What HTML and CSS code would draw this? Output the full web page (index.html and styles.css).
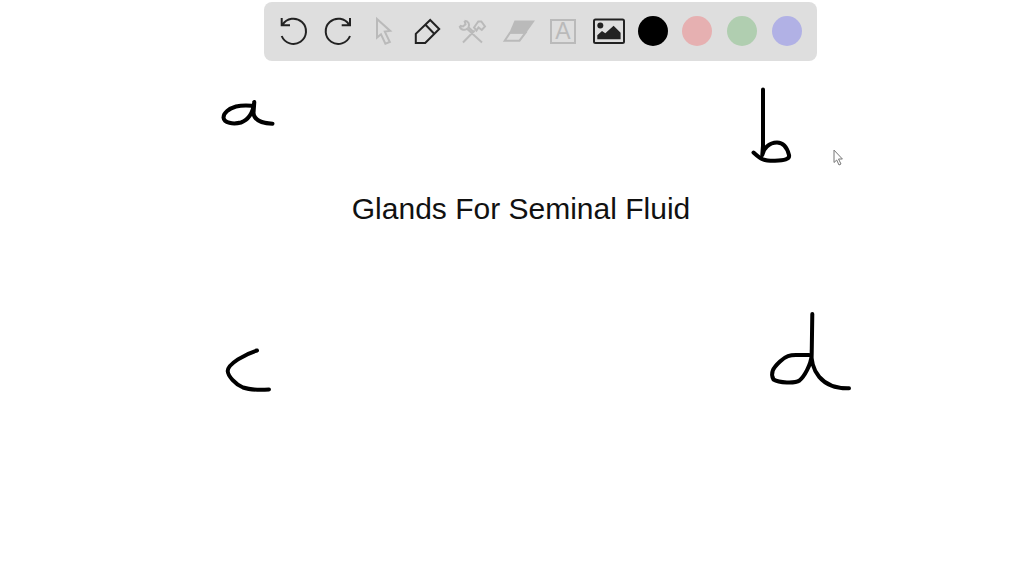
FILE: index.html
```html
<!DOCTYPE html>
<html lang="en">
<head>
<meta charset="utf-8">
<meta name="viewport" content="width=device-width, initial-scale=1">
<title>Glands For Seminal Fluid</title>
<link rel="stylesheet" href="styles.css">
</head>
<body>
<main class="board">
  <header class="board-header">
    <div class="toolbar" role="toolbar" aria-label="Drawing tools">
      <button class="tool" type="button" aria-label="Undo">
        <svg class="icon" viewBox="0 0 30 30"><path d="M2.700 20A12.600 12.600 0 1 0 3.500 9M2.700 2V9.300H11"/></svg>
      </button>
      <button class="tool" type="button" aria-label="Redo">
        <svg class="icon" viewBox="0 0 30 30"><path d="M26 20A12.600 12.600 0 1 1 25.200 9M26 2V9.300H17.700"/></svg>
      </button>
      <button class="tool tool-muted" type="button" aria-label="Select">
        <svg class="icon" viewBox="0 0 30 30"><path d="M8 3L21.200 14.900L15.800 15.600L20.800 26L16.400 27.700L12 18.300L8 21.600Z"/></svg>
      </button>
      <button class="tool" type="button" aria-label="Pen">
        <svg class="icon" viewBox="0 0 30 30"><path d="M17.200 4L26.200 13L12.200 27H2.800V17.900ZM12.500 8.800L21.200 17.800"/></svg>
      </button>
      <button class="tool tool-muted" type="button" aria-label="Tools">
        <svg class="icon" viewBox="0 0 30 30"><path d="M1.700 9.800C2 13.500 6 15 9 12.800L24 26.500M6.500 4.800C10.500 5 12 8.500 10.500 11.300L15 15.500M1.700 9.800L5 10.500L7.500 8.300L6.500 4.800M16.700 14.500L5 26.500M16 11.500L20.300 5.500H23.300L27 10.500L23.800 14L20.500 11.500L18.500 14.500Z"/></svg>
      </button>
      <button class="tool tool-muted" type="button" aria-label="Eraser">
        <svg class="icon" viewBox="0 0 30 30"><path d="M7 16.700L1.700 24.700H16.500L22.500 16.700Z"/><path class="solid" d="M11.500 4.500H32L22.700 17.500H6Z"/></svg>
      </button>
      <button class="tool tool-muted" type="button" aria-label="Text">
        <svg class="icon" viewBox="0 0 30 30"><rect x="3" y="4" width="24" height="23"/><text class="icon-letter" x="15" y="23" text-anchor="middle">A</text></svg>
      </button>
      <button class="tool" type="button" aria-label="Image">
        <svg class="icon" viewBox="0 0 30 30"><rect x="1" y="3.500" width="30" height="23.500" rx="1.500"/><circle class="solid" cx="7.300" cy="9.500" r="3"/><path class="solid" d="M4.300 23.300V19.300L9 15L12.300 17.300L20.600 9.700L27.600 16.700V23.300Z"/></svg>
      </button>
      <button class="tool swatch swatch-black" type="button" aria-label="Black"></button>
      <button class="tool swatch swatch-red" type="button" aria-label="Red"></button>
      <button class="tool swatch swatch-green" type="button" aria-label="Green"></button>
      <button class="tool swatch swatch-blue" type="button" aria-label="Blue"></button>
    </div>
  </header>
  <h1 class="title">Glands For Seminal Fluid</h1>
  <svg class="drawing" viewBox="0 0 1024 576" role="img" aria-label="Handwritten letters a, b, c and d">
    <path d="M251.500 105.700C246 105.300 241 105.300 236 106.500C229 108.500 223.500 113 223.500 117.500C224 123 233 124.500 241 122.500C248 120 253 113 254.300 102L253.500 113C254 119 259 123 272.500 123.700"/>
    <path d="M763 89.500V146L762.300 155C763 149 769 142.500 777 142.500C785 142.500 787.500 149 789 155C790 159.500 784 160.500 775 160.800C764 161 761 159.500 753.500 152.500"/>
    <path d="M257 350.500C245 354 228 364 227.700 371C228 376 235 384 243 387.500C250 390 260 390 269 389.500"/>
    <path d="M812.300 314L811.700 355C811 365 804 377 799.500 380.500C795 383.500 779 383 773.500 379.500C770 373 773 368 780 361.500C786 356 790 355 796 355H809M811.700 350C810 370 821 389 849 388.300"/>
    <path class="cursor" d="M834 150.500V162.500L836.700 160L839 165L841 164L838.500 159H842Z"/>
  </svg>
</main>
</body>
</html>
```

FILE: styles.css
```css
* {
  box-sizing: border-box;
}

body {
  margin: 0;
  background: #fff;
  color: #111;
  font-family: "Liberation Sans", Arial, sans-serif;
}

.board {
  position: relative;
  min-height: 100vh;
  overflow: hidden;
}

.board-header {
  display: flex;
  justify-content: center;
  padding: 2px 0 0 57px;
}

.toolbar {
  display: flex;
  align-items: center;
  justify-content: space-between;
  flex: 0 1 553px;
  padding: 14px 15px 15px;
  border-radius: 8px;
  background: #dedede;
}

.tool {
  display: block;
  width: 30px;
  height: 30px;
  padding: 0;
  border: 0;
  background: none;
  color: #222;
  cursor: pointer;
}

.tool-muted {
  color: #bababa;
}

.icon {
  display: block;
  width: 30px;
  height: 30px;
  overflow: visible;
  fill: none;
  stroke: currentColor;
  stroke-width: 2;
}

.icon .solid,
.icon-letter {
  fill: currentColor;
  stroke: none;
}

.icon-letter {
  font-family: "Liberation Sans", Arial, sans-serif;
  font-size: 23px;
}

.swatch {
  border-radius: 50%;
}

.swatch-black {
  background: #000;
}

.swatch-red {
  background: #e6b0b1;
}

.swatch-green {
  background: #b0ceb0;
}

.swatch-blue {
  background: #b1b1e5;
}

.title {
  margin: 131px 0 0;
  padding-left: 18px;
  font-size: 30px;
  font-weight: 400;
  line-height: 34px;
  text-align: center;
}

.drawing {
  position: absolute;
  top: 0;
  left: 0;
  width: 100%;
  fill: none;
  stroke: #000;
  stroke-width: 4;
  stroke-linecap: round;
  stroke-linejoin: round;
  pointer-events: none;
}

.drawing .cursor {
  fill: #fff;
  stroke: #777;
  stroke-width: 1;
}
```
